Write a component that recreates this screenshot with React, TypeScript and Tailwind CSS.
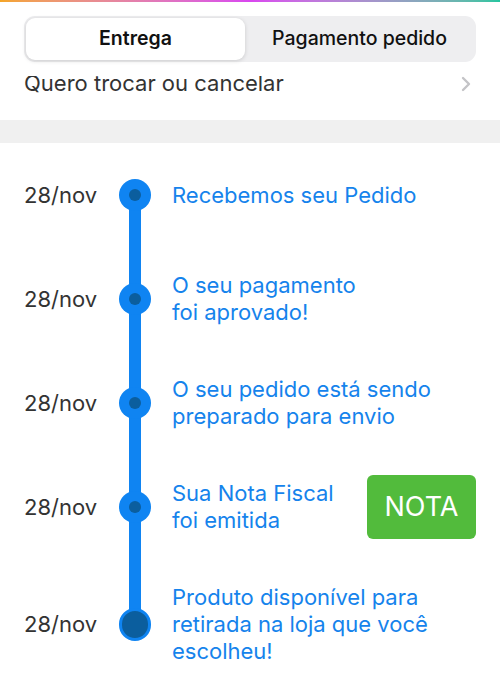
import React from "react";

type Step = { date: string; lines: string[]; nota?: boolean };

const steps: Step[] = [
  { date: "28/nov", lines: ["Recebemos seu Pedido"] },
  { date: "28/nov", lines: ["O seu pagamento", "foi aprovado!"] },
  { date: "28/nov", lines: ["O seu pedido está sendo", "preparado para envio"] },
  { date: "28/nov", lines: ["Sua Nota Fiscal", "foi emitida"], nota: true },
  { date: "28/nov", lines: ["Produto disponível para", "retirada na loja que você", "escolheu!"] },
];

export default function App() {
  return (
    <div
      className="w-[500px] h-[695px] overflow-hidden bg-white"
      style={{ fontFamily: "Inter, 'Noto Sans', sans-serif" }}
    >
      {/* header */}
      <div className="relative z-10 bg-white h-[76px]">
        <div className="h-[2px] bg-gradient-to-r from-[#f5a524] via-[#d946ef] to-[#22c5a0]" />
        <div className="px-[24px] pt-[14px]">
          <div className="flex h-[46px] rounded-[11px] bg-[#eeeef0] p-[2px]">
            <div className="flex w-[219px] items-center justify-center rounded-[9px] bg-white shadow-[0_1px_4px_rgba(0,0,0,0.15)] text-[19.5px] font-semibold text-[#111]">
              Entrega
            </div>
            <div className="flex flex-1 items-center justify-center text-[19.5px] font-medium text-[#111]">
              Pagamento pedido
            </div>
          </div>
        </div>
      </div>

      {/* scrolled row */}
      <div className="mt-[-8px] flex h-[52px] items-start justify-between px-[24px]">
        <span className="text-[22px] leading-[30px] text-[#333]">Quero trocar ou cancelar</span>
        <svg width="12" height="16" viewBox="0 0 12 16" className="mt-[8px] mr-[4px]">
          <path d="M3 2 L9 8 L3 14" fill="none" stroke="#c4c4c7" strokeWidth="2.4" strokeLinecap="round" strokeLinejoin="round" />
        </svg>
      </div>

      {/* gray band */}
      <div className="h-[23px] bg-[#f0f0f0]" />

      {/* timeline */}
      <div className="flex flex-col px-[24px]">
        {steps.map((s, i) => {
          const first = i === 0;
          const last = i === steps.length - 1;
          return (
            <div key={i} className="flex min-h-[104px] items-center">
              <div className="w-[95px] text-[22px] text-[#333]">{s.date}</div>
              <div className="relative flex w-[32px] self-stretch items-center justify-center">
                <div
                  className={
                    "absolute left-[10px] w-[12px] bg-[#0f84f2] " +
                    (first ? "top-1/2 bottom-0" : last ? "top-0 bottom-1/2" : "top-0 bottom-0")
                  }
                />
                {last ? (
                  <div className="relative h-[33px] w-[33px] rounded-full bg-[#0b5e9e] border-[3px] border-[#0f84f2]" />
                ) : (
                  <div className="relative flex h-[32px] w-[32px] items-center justify-center rounded-full bg-[#0f84f2]">
                    <div className="h-[12px] w-[12px] rounded-full bg-[#0b5e9e]" />
                  </div>
                )}
              </div>
              <div className={"ml-[21px] flex-1 text-[22px] leading-[27px] text-[#1583ec] " + (last ? "py-[25px]" : "")}>
                {s.lines.map((l, j) => (
                  <div key={j}>{l}</div>
                ))}
              </div>
              {s.nota && (
                <div className="flex h-[64px] w-[109px] items-center justify-center rounded-[6px] bg-[#52bb3c] text-[27px] text-white">
                  NOTA
                </div>
              )}
            </div>
          );
        })}
      </div>
    </div>
  );
}
